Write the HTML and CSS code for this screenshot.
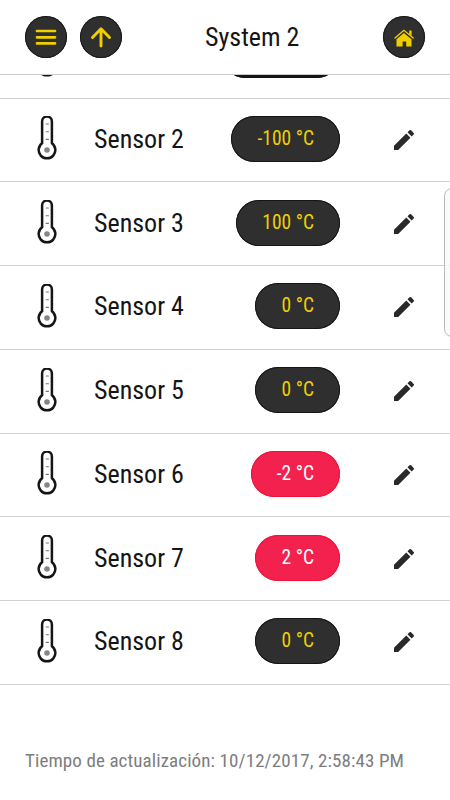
FILE: index.html
```
<!DOCTYPE html>
<html lang="es">
<head>
<meta charset="utf-8">
<title>System 2</title>
<link rel="stylesheet" href="styles.css">
</head>
<body>
<svg class="defs" aria-hidden="true">
  <symbol id="thermometer" viewBox="0 0 20 44">
    <path d="M5.1 27.2V5.4a4.9 4.9 0 0 1 9.8 0v21.8a8.35 8.35 0 1 1-9.8 0Z" fill="#fff" stroke="#151515" stroke-width="2.5"/>
    <circle cx="10" cy="34" r="2.8" fill="#85858a"/>
    <path d="M8.7 8h3.2M8.7 15.7h3.2M8.7 23.4h3.2" stroke="#777" stroke-width="1.1"/>
  </symbol>
  <symbol id="pencil" viewBox="3 3 18 18">
    <path fill="#292929" d="M3 17.25V21h3.75L17.81 9.94l-3.75-3.75L3 17.25zM20.71 7.04a1 1 0 0 0 0-1.41l-2.34-2.34a1 1 0 0 0-1.41 0l-1.83 1.83 3.75 3.75 1.83-1.83z"/>
  </symbol>
</svg>
<main class="screen">
  <header class="bar">
    <button class="round"><svg viewBox="0 0 42 42"><path d="M12 15h18M12 21.3h18M12 27.4h18" stroke="#efcf00" stroke-width="2.7" stroke-linecap="round"/></svg></button>
    <button class="round"><svg viewBox="0 0 42 42"><path d="M21 30V13M12.5 21.5l8.5-8.7 8.5 8.7" fill="none" stroke="#efcf00" stroke-width="2.9" stroke-linecap="round" stroke-linejoin="round"/></svg></button>
    <h1 class="title">System 2</h1>
    <button class="round"><svg viewBox="0 0 42 42"><path fill="#efcf00" d="M13.5 30.4v-7.2l7.4-6.2 7.6 6.2v7.2h-5.3v-5h-3.6v5z"/><path d="M12 22l8.9-7.7 9.3 7.7" fill="none" stroke="#efcf00" stroke-width="1.4" stroke-linecap="round"/><path fill="#efcf00" d="M26.2 14.5h2.4v5.2l-2.4-2z"/></svg></button>
  </header>
  <section class="list">
    <div class="row"><svg class="thermo"><use href="#thermometer"/></svg><span class="name"></span><span class="pill first"></span><svg class="edit"><use href="#pencil"/></svg></div>
    <div class="row"><svg class="thermo"><use href="#thermometer"/></svg><span class="name">Sensor 2</span><span class="pill">-100 °C</span><svg class="edit"><use href="#pencil"/></svg></div>
    <div class="row"><svg class="thermo"><use href="#thermometer"/></svg><span class="name">Sensor 3</span><span class="pill">100 °C</span><svg class="edit"><use href="#pencil"/></svg></div>
    <div class="row"><svg class="thermo"><use href="#thermometer"/></svg><span class="name">Sensor 4</span><span class="pill">0 °C</span><svg class="edit"><use href="#pencil"/></svg></div>
    <div class="row"><svg class="thermo"><use href="#thermometer"/></svg><span class="name">Sensor 5</span><span class="pill">0 °C</span><svg class="edit"><use href="#pencil"/></svg></div>
    <div class="row"><svg class="thermo"><use href="#thermometer"/></svg><span class="name">Sensor 6</span><span class="pill alert">-2 °C</span><svg class="edit"><use href="#pencil"/></svg></div>
    <div class="row"><svg class="thermo"><use href="#thermometer"/></svg><span class="name">Sensor 7</span><span class="pill alert">2 °C</span><svg class="edit"><use href="#pencil"/></svg></div>
    <div class="row"><svg class="thermo"><use href="#thermometer"/></svg><span class="name">Sensor 8</span><span class="pill">0 °C</span><svg class="edit"><use href="#pencil"/></svg></div>
  </section>
  <footer class="updated">Tiempo de actualización: 10/12/2017, 2:58:43 PM</footer>
  <div class="drawer"></div>
</main>
</body>
</html>
```
FILE: styles.css
```
* { box-sizing: border-box; }
body { margin: 0; background: #fff; font-family: "Roboto Condensed", Roboto, sans-serif; font-stretch: 75%; color: #151515; }
.defs { position: absolute; width: 0; height: 0; }
.screen { position: relative; width: 450px; height: 800px; overflow: hidden; }
.bar { position: relative; z-index: 1; display: flex; align-items: center; height: 75px; padding: 0 25px; gap: 13px; background: #fff; border-bottom: 1px solid #c9c9c9; }
.round { width: 42px; height: 42px; padding: 0; border: 0; border-radius: 50%; background: #2f2f2f; box-shadow: inset 0 0 0 1px #171717; }
.round svg { display: block; width: 42px; height: 42px; }
.title { flex: 1; margin: 0; padding-left: 70px; font-size: 26px; font-weight: 400; line-height: 30px; white-space: nowrap; }
.list { margin-top: -60.25px; }
.row { display: grid; grid-template-columns: 69px 1fr auto 85px; align-items: center; height: 83.75px; padding: 0 0 2px 25px; border-bottom: 1px solid #d2d2d2; }
.thermo { width: 20px; height: 44px; margin: -1px 0 0 12px; }
.name { font-size: 26px; line-height: 30px; white-space: nowrap; }
.pill { display: block; min-width: 85px; height: 46px; margin-right: 25px; padding: 0 26px; border-radius: 23px; background: #2f2f2f; box-shadow: inset 0 0 0 1px #151515; color: #efcf00; font-size: 19.5px; line-height: 46px; text-align: right; white-space: nowrap; }
.first { width: 118px; background: #151515; }
.alert { background: #f3214e; box-shadow: inset 0 0 0 1px #ef1236; color: #fff; }
.edit { width: 20px; height: 20px; margin: 2px 0 0 29px; }
.updated { margin-top: 64px; padding-left: 25px; color: #7d7d80; font-size: 19px; letter-spacing: .1px; line-height: 24px; white-space: nowrap; }
.drawer { position: absolute; left: 444px; top: 188px; width: 20px; height: 149px; border: 1px solid #bbb; border-radius: 8px; background: rgba(248,248,248,.7); }
```
